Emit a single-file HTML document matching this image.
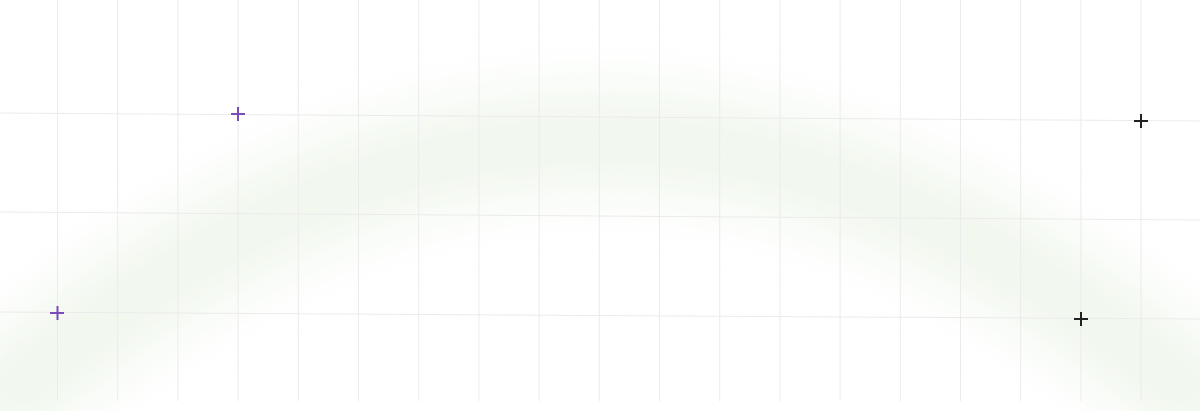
<!DOCTYPE html>
<html><head><style>
html,body{margin:0;padding:0;background:#fff;width:1200px;height:411px;overflow:hidden}
</style></head><body>
<svg width="1200" height="411" viewBox="0 0 1200 411" xmlns="http://www.w3.org/2000/svg">
<defs><filter id="b" x="-20%" y="-50%" width="140%" height="200%"><feGaussianBlur stdDeviation="28"/></filter></defs>
<path d="M-20 420 Q 600 -140 1220 420" fill="none" stroke="#e9f3e4" stroke-width="100" filter="url(#b)" opacity="0.65"/>
<g stroke="#ebebeb" stroke-width="1">
<line x1="57.5" y1="0" x2="57.5" y2="401"/><line x1="117.7" y1="0" x2="117.7" y2="401"/><line x1="177.9" y1="0" x2="177.9" y2="401"/><line x1="238.1" y1="0" x2="238.1" y2="401"/><line x1="298.3" y1="0" x2="298.3" y2="401"/><line x1="358.5" y1="0" x2="358.5" y2="401"/><line x1="418.7" y1="0" x2="418.7" y2="401"/><line x1="478.9" y1="0" x2="478.9" y2="401"/><line x1="539.1" y1="0" x2="539.1" y2="401"/><line x1="599.3" y1="0" x2="599.3" y2="401"/><line x1="659.5" y1="0" x2="659.5" y2="401"/><line x1="719.7" y1="0" x2="719.7" y2="401"/><line x1="779.9" y1="0" x2="779.9" y2="401"/><line x1="840.1" y1="0" x2="840.1" y2="401"/><line x1="900.3" y1="0" x2="900.3" y2="401"/><line x1="960.5" y1="0" x2="960.5" y2="401"/><line x1="1020.7" y1="0" x2="1020.7" y2="401"/><line x1="1080.9" y1="0" x2="1080.9" y2="401"/><line x1="1141.1" y1="0" x2="1141.1" y2="401"/>
<line x1="0" y1="113" x2="1200" y2="121"/><line x1="0" y1="212" x2="1200" y2="220"/><line x1="0" y1="312" x2="1200" y2="319"/>
</g>
<g stroke-width="2">
<path d="M231 114H245M238 107V121" stroke="#7b4bb8"/>
<path d="M50 313H64M57.5 306V320" stroke="#7b4bb8"/>
<path d="M1134 121H1148M1141 114V128" stroke="#222"/>
<path d="M1074 319H1088M1081 312V326" stroke="#222"/>
</g>
</svg>
</body></html>
